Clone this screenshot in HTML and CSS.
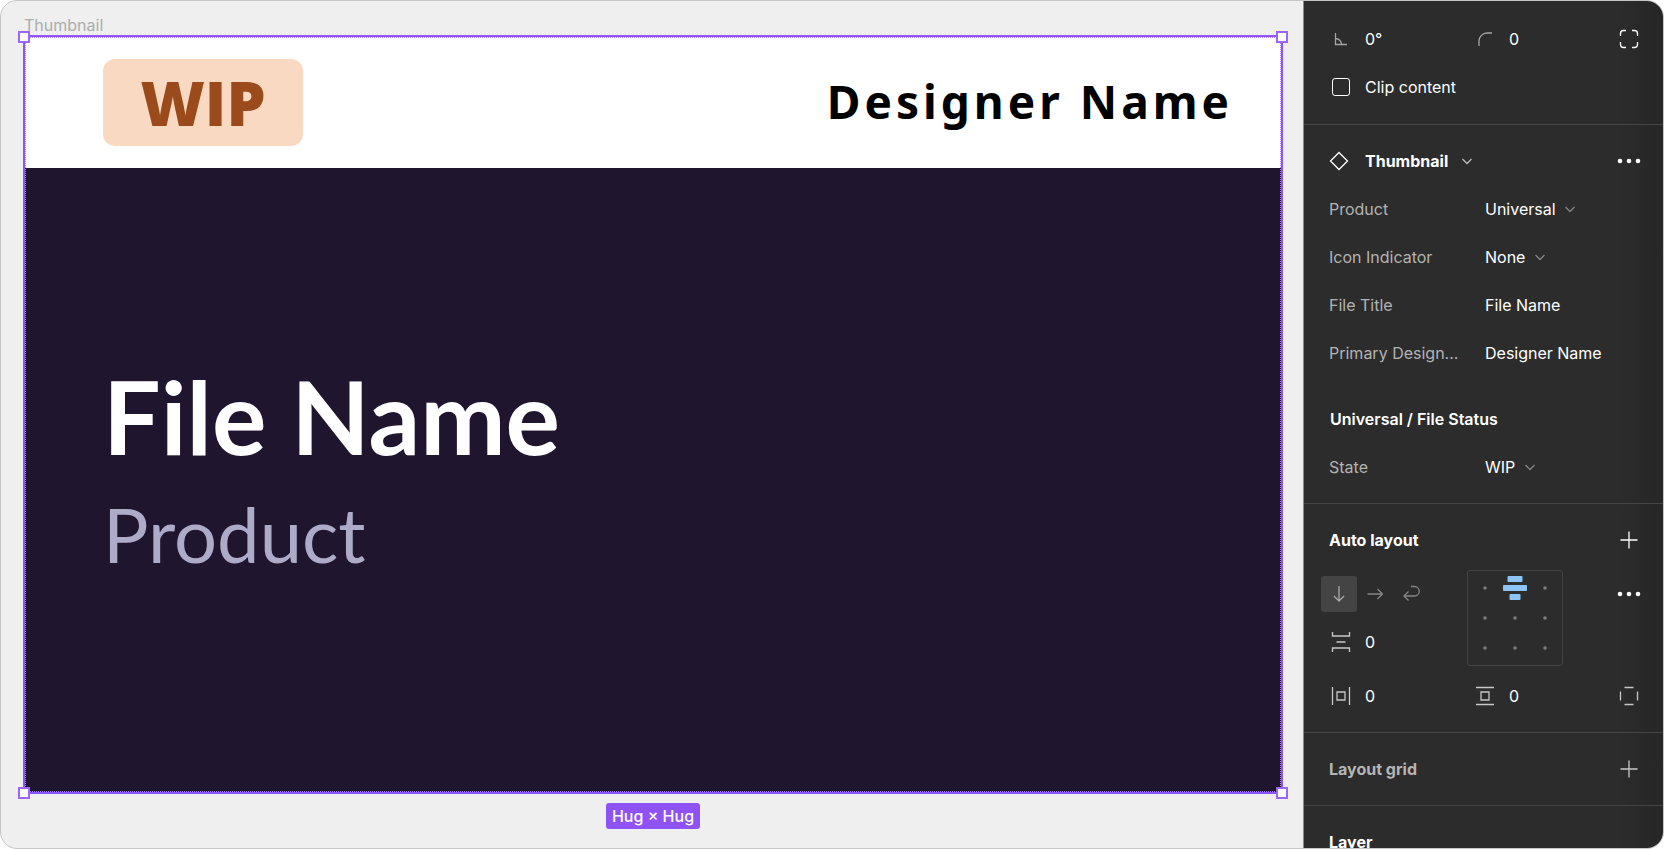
FILE: index.html
```html
<!DOCTYPE html>
<html lang="en">
<head>
<meta charset="utf-8">
<title>Thumbnail</title>
<link rel="stylesheet" href="styles.css">
</head>
<body>
<div class="app">
  <main class="canvas">
    <div class="frame-label">Thumbnail</div>
    <section class="artboard">
      <header class="art-header">
        <span class="status">WIP</span>
        <span class="designer">Designer Name</span>
      </header>
      <div class="art-body">
        <h1 class="file-name">File Name</h1>
        <p class="product">Product</p>
      </div>
      <i class="outline"></i>
      <i class="handle top left"></i>
      <i class="handle top right"></i>
      <i class="handle bottom left"></i>
      <i class="handle bottom right"></i>
    </section>
    <div class="size-badge">Hug × Hug</div>
  </main>

  <aside class="panel">
    <section class="section first">
      <div class="row cols">
        <label class="field">
          <svg class="icon dim" viewBox="0 0 24 24"><path d="M6.5 6v11.5H18M6.500 11.500a6 6 0 0 1 6 6"/></svg>
          <input class="num" type="text" value="0°" aria-label="Rotation">
        </label>
        <label class="field">
          <svg class="icon dim" viewBox="0 0 24 24"><path d="M6 19v-5a8 8 0 0 1 8-8h5"/></svg>
          <input class="num" type="text" value="0" aria-label="Corner radius">
        </label>
        <button class="icon-button" aria-label="Independent corners">
          <svg class="icon" viewBox="0 0 24 24"><path d="M3.500 9V6.500a3 3 0 0 1 3-3H9M15 3.500h2.500a3 3 0 0 1 3 3V9M20.500 15v2.500a3 3 0 0 1-3 3H15M9 20.500H6.500a3 3 0 0 1-3-3V15"/></svg>
        </button>
      </div>
      <div class="row">
        <label class="field">
          <span class="check-cell"><input class="check" type="checkbox"></span>
          <span>Clip content</span>
        </label>
      </div>
    </section>

    <section class="section">
      <div class="row split">
        <label class="field">
          <svg class="icon diamond" viewBox="0 0 24 24"><path d="M12 3.500l8.500 8.500-8.500 8.500L3.500 12z"/></svg>
          <select class="pick strong" aria-label="Component"><option>Thumbnail</option></select>
          <svg class="chevron light" viewBox="0 0 12 12"><path d="M1.500 4L6 8.500 10.500 4"/></svg>
        </label>
        <button class="icon-button" aria-label="More options">
          <svg class="icon dots" viewBox="0 0 24 24"><circle cx="3" cy="12" r="2.300"/><circle cx="12" cy="12" r="2.300"/><circle cx="21" cy="12" r="2.300"/></svg>
        </button>
      </div>
      <div class="row prop">
        <label class="name" for="product">Product</label>
        <span class="value"><select class="pick" id="product"><option>Universal</option></select>
        <svg class="chevron" viewBox="0 0 12 12"><path d="M1.500 4L6 8.500 10.500 4"/></svg></span>
      </div>
      <div class="row prop">
        <label class="name" for="indicator">Icon Indicator</label>
        <span class="value"><select class="pick" id="indicator"><option>None</option></select>
        <svg class="chevron" viewBox="0 0 12 12"><path d="M1.500 4L6 8.500 10.500 4"/></svg></span>
      </div>
      <div class="row prop">
        <label class="name" for="title">File Title</label>
        <input class="text" id="title" type="text" value="File Name">
      </div>
      <div class="row prop">
        <label class="name" for="designer">Primary Design...</label>
        <input class="text" id="designer" type="text" value="Designer Name">
      </div>
      <h3 class="row subhead">Universal / File Status</h3>
      <div class="row prop">
        <label class="name" for="state">State</label>
        <span class="value"><select class="pick" id="state"><option>WIP</option></select>
        <svg class="chevron" viewBox="0 0 12 12"><path d="M1.500 4L6 8.500 10.500 4"/></svg></span>
      </div>
    </section>

    <section class="section">
      <div class="row split">
        <h2 class="title">Auto layout</h2>
        <button class="icon-button" aria-label="Add auto layout">
          <svg class="icon" viewBox="0 0 24 24"><path d="M12 3.500v17M3.500 12h17"/></svg>
        </button>
      </div>
      <div class="layout-grid">
        <div class="left-tools">
          <div class="row directions">
            <button class="dir active" aria-label="Vertical"><svg class="icon" viewBox="0 0 24 24"><path d="M12 4v15M7 14l5 5 5-5"/></svg></button>
            <button class="dir" aria-label="Horizontal"><svg class="icon" viewBox="0 0 24 24"><path d="M4.500 12h15M14.500 7l5 5-5 5"/></svg></button>
            <button class="dir" aria-label="Wrap"><svg class="icon" viewBox="0 0 24 24"><path d="M12 4.500h3.500a4.500 4.500 0 0 1 0 9.500H5M9.500 9.500L5 14l4.500 4.500"/></svg></button>
          </div>
          <label class="row field">
            <svg class="icon soft" viewBox="0 0 24 24"><path d="M3.500 2v4h17V2M3.500 22v-4h17v4M7.500 12h9"/></svg>
            <input class="num" type="text" value="0" aria-label="Gap">
          </label>
        </div>
        <button class="align" aria-label="Alignment">
          <svg viewBox="0 0 94 94"><g class="pips"><circle cx="17" cy="17" r="1.800"/><circle cx="77" cy="17" r="1.800"/><circle cx="17" cy="47" r="1.800"/><circle cx="47" cy="47" r="1.800"/><circle cx="77" cy="47" r="1.800"/><circle cx="17" cy="77" r="1.800"/><circle cx="47" cy="77" r="1.800"/><circle cx="77" cy="77" r="1.800"/></g><g class="bars"><rect x="39.500" y="5" width="15" height="6" rx="1"/><rect x="35" y="14" width="24" height="6" rx="1"/><rect x="41.500" y="23" width="11" height="6" rx="1"/></g></svg>
        </button>
        <button class="icon-button" aria-label="Advanced layout">
          <svg class="icon dots" viewBox="0 0 24 24"><circle cx="3" cy="12" r="2.300"/><circle cx="12" cy="12" r="2.300"/><circle cx="21" cy="12" r="2.300"/></svg>
        </button>
      </div>
      <div class="row cols">
        <label class="field">
          <svg class="icon soft" viewBox="0 0 24 24"><path d="M3.500 3v18M20.500 3v18M8 8h8v8H8z"/></svg>
          <input class="num" type="text" value="0" aria-label="Horizontal padding">
        </label>
        <label class="field">
          <svg class="icon soft" viewBox="0 0 24 24"><path d="M3 3.500h18M3 20.500h18M8 8h8v8H8z"/></svg>
          <input class="num" type="text" value="0" aria-label="Vertical padding">
        </label>
        <button class="icon-button" aria-label="Independent padding">
          <svg class="icon soft" viewBox="0 0 24 24"><path d="M7.500 3.500h9M7.500 20.500h9M3.500 7.500v9M20.500 7.500v9"/></svg>
        </button>
      </div>
    </section>

    <section class="section">
      <div class="row split">
        <h2 class="title muted">Layout grid</h2>
        <button class="icon-button" aria-label="Add layout grid">
          <svg class="icon soft" viewBox="0 0 24 24"><path d="M12 3.500v17M3.500 12h17"/></svg>
        </button>
      </div>
    </section>

    <section class="section">
      <div class="row split">
        <h2 class="title">Layer</h2>
      </div>
    </section>
  </aside>
</div>
</body>
</html>
```

FILE: styles.css
```css
* { box-sizing: border-box; }

body {
  margin: 0;
  background: #fff;
  font: 16px/24px Inter, "Liberation Sans", sans-serif;
}

h1, h2, h3, p { margin: 0; }

button, input, select {
  margin: 0;
  padding: 0;
  border: 0;
  background: none;
  color: inherit;
  font: inherit;
}

.app {
  display: flex;
  height: 100vh;
  border: 1px solid #c6c6c6;
  border-radius: 17px;
  overflow: hidden;
  background: #efefef;
}

/* Canvas */
.canvas {
  flex: 1;
  display: flex;
  flex-direction: column;
  padding: 12px 20px 19px 22px;
}

.frame-label {
  height: 22px;
  padding-left: 1px;
  color: #adadad;
}

.artboard {
  position: relative;
  flex: 1;
  display: flex;
  flex-direction: column;
  border: 2px solid #8f55fb;
  background: #20152e;
}

.art-header {
  display: flex;
  align-items: center;
  justify-content: space-between;
  height: 131px;
  padding: 0 48px 0 78px;
  background: #fff;
}

.status {
  min-width: 200px;
  padding: 0 24px;
  border-radius: 12px;
  background: #f9d9c2;
  color: #9b4a1b;
  font: 800 62px/87px "Open Sans", sans-serif;
  text-align: center;
}

.designer {
  padding-bottom: 4px;
  color: #000;
  font: 700 46px/60px "Noto Sans", sans-serif;
  letter-spacing: 4px;
}

.art-body {
  flex: 1;
  display: flex;
  flex-direction: column;
  justify-content: center;
  padding: 0 78px 26px;
}

.file-name {
  color: #fff;
  font: 700 102px/134px Lato, sans-serif;
}

.product {
  color: #adabc8;
  font: 400 76px/102px Lato, sans-serif;
}

.outline {
  position: absolute;
  inset: 0;
  border: 1px dotted #a981f5;
}

.handle {
  position: absolute;
  width: 12px;
  height: 12px;
  border: 2px solid #9a66fb;
  background: #fff;
}

.top { top: -6px; }
.bottom { bottom: -7px; }
.left { left: -7px; }
.right { right: -7px; }

.size-badge {
  align-self: center;
  margin-top: 9px;
  padding: 1px 6px;
  border-radius: 3px;
  background: #8f52f7;
  color: #fff;
  font-weight: 500;
}

/* Properties panel */
.panel {
  width: 360px;
  flex: none;
  overflow: hidden;
  border-left: 1px solid #8a8a8a;
  background: linear-gradient(to right, #2c2c2c 88%, #262626);
  color: #fff;
}

.section {
  padding: 12px 10px 12px 13px;
  border-bottom: 1px solid #444;
}

.section.first {
  padding-top: 14px;
  padding-bottom: 13px;
}

.row {
  display: flex;
  align-items: center;
  height: 48px;
}

.cols {
  display: grid;
  grid-template-columns: 144px 144px 1fr;
}

.split { justify-content: space-between; }

.field {
  display: flex;
  align-items: center;
}

.icon {
  flex: none;
  width: 24px;
  height: 24px;
  margin: 0 12px;
  fill: none;
  stroke: #fff;
  stroke-width: 1.3;
}

.dim { stroke: #a4a4a4; }
.soft { stroke: #c8c8c8; }
.dots { fill: #fff; stroke: none; }
.diamond { margin: 0 14px 0 10px; }

.num { width: 60px; }
.text { width: 150px; }

.check-cell {
  display: flex;
  justify-content: center;
  width: 48px;
}

.check {
  appearance: none;
  width: 18px;
  height: 18px;
  border: 1px solid #fff;
  border-radius: 3px;
}

.icon-button {
  display: flex;
  align-items: center;
  justify-content: center;
  justify-self: end;
  width: 48px;
  height: 48px;
}

.pick { appearance: none; }
.strong { font-weight: 700; }

.chevron {
  width: 12px;
  height: 12px;
  margin-left: 8px;
  fill: none;
  stroke: #858585;
  stroke-width: 1.3;
}

.light {
  margin-left: 12px;
  stroke: #bdbdbd;
}

.prop {
  display: grid;
  grid-template-columns: 156px 1fr;
  padding-left: 12px;
}

.name { color: #b3b3b3; }

.value {
  display: flex;
  align-items: center;
}

.subhead {
  margin-top: 18px;
  padding-left: 13px;
  font-size: 16px;
  font-weight: 600;
}

.title {
  padding-left: 12px;
  font-size: 16px;
  font-weight: 700;
}

.muted { color: #b5b5b5; }

.layout-grid {
  display: grid;
  grid-template-columns: 150px 96px 1fr;
  padding: 6px 0;
}

.directions { padding-left: 4px; }

.dir {
  display: flex;
  align-items: center;
  justify-content: center;
  width: 36px;
  height: 36px;
  border-radius: 3px;
}

.dir .icon { stroke: #858585; }
.active { background: #444; }
.active .icon { stroke: #a8a8a8; }

.align {
  height: 96px;
  border: 1px solid #444;
  border-radius: 3px;
}

.align svg { display: block; }
.pips { fill: #7d7d7d; }
.bars { fill: #8cc4f5; }
```
